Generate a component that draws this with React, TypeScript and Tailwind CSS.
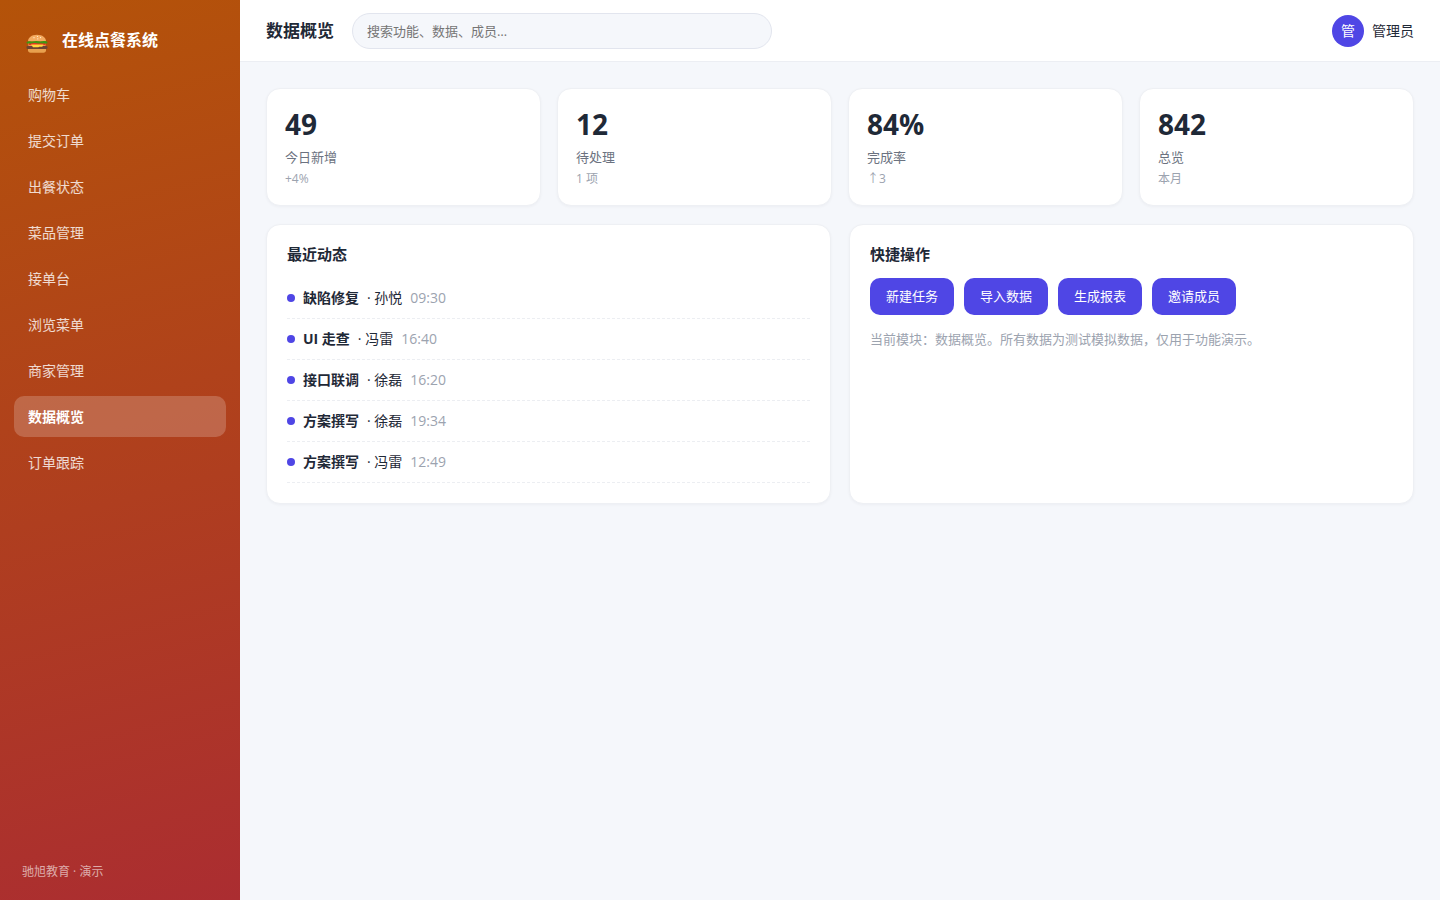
import type { ReactNode } from "react";

type Activity = { title: string; who: string; time: string };

const NAV = ["购物车", "提交订单", "出餐状态", "菜品管理", "接单台", "浏览菜单", "商家管理", "数据概览", "订单跟踪"];

const STATS = [
  { value: "49", label: "今日新增", note: "+4%" },
  { value: "12", label: "待处理", note: "1 项" },
  { value: "84%", label: "完成率", note: "↑3" },
  { value: "842", label: "总览", note: "本月" },
];

const ACTIVITIES: Activity[] = [
  { title: "缺陷修复", who: "孙悦", time: "09:30" },
  { title: "UI 走查", who: "冯雷", time: "16:40" },
  { title: "接口联调", who: "徐磊", time: "16:20" },
  { title: "方案撰写", who: "徐磊", time: "19:34" },
  { title: "方案撰写", who: "冯雷", time: "12:49" },
];

const ACTIONS = ["新建任务", "导入数据", "生成报表", "邀请成员"];

function BurgerIcon() {
  return (
    <svg viewBox="0 0 22 20" className="mt-1.5 h-5 w-[22px] shrink-0" aria-hidden="true">
      <path d="M2 8.500C2 4.500 5.500 1.700 11 1.700s9 2.800 9 6.800z" fill="#f4ab60" />
      <path d="M2 15.500h18v1.800c0 1.500-1 2.500-2.500 2.500h-13C3 19.800 2 18.800 2 17.300z" fill="#e8a04e" />
      <path d="M2.500 9.500h17V13h-17z" fill="#f4ab60" />
      <rect x="0.500" y="13" width="21" height="3" rx="1.200" fill="#6d4534" />
      <path d="M3 9.800h16.500v2.400H3z" fill="#ee2f24" />
      <path d="M5 11.600h12.500l-1.200 2.200h-3l-1 .500H7z" fill="#ffd93b" />
      <path d="M.3 9.700C1.500 8 3.500 8.100 5 8.400c2 .4 3.500-.5 5.500-.4s3.800.7 5.700.3c2-.4 4.400-.3 5.500 1.200-.8 1.200-2.200 1.300-3.700 1.100-2-.3-3-.7-4.500-.2-2 .6-3.500-.6-5.500-.3s-3 .7-4.600.5c-1.200-.1-2.400.2-3.100-.9z" fill="#3f9712" />
      <g fill="#fff3dc">
        <circle cx="8" cy="4.700" r="0.600" />
        <circle cx="11.500" cy="3.500" r="0.600" />
        <circle cx="11.800" cy="5.800" r="0.600" />
        <circle cx="14.500" cy="4.600" r="0.600" />
      </g>
    </svg>
  );
}

function Sidebar() {
  return (
    <aside className="flex w-60 shrink-0 flex-col bg-[linear-gradient(165deg,#b45309_0%,#ab2d31_100%)] px-3.5 pt-5 pb-4 text-white">
      <div className="flex h-10 items-center gap-3.5 px-3">
        <BurgerIcon />
        <span className="text-base font-bold">在线点餐系统</span>
      </div>
      <nav className="mt-3.5 flex flex-col gap-[5px]">
        {NAV.map((item) => {
          const active = item === "数据概览";
          return (
            <a
              key={item}
              href="#"
              aria-current={active ? "page" : undefined}
              className={`flex h-[41px] items-center rounded-[10px] px-3.5 text-sm ${active ? "bg-white/20 font-bold text-white" : "text-white/80"}`}
            >
              {item}
            </a>
          );
        })}
      </nav>
      <div className="mt-auto px-2 text-xs leading-6 text-white/60">驰旭教育 · 演示</div>
    </aside>
  );
}

function Topbar() {
  return (
    <header className="flex h-[62px] items-center gap-[18px] border-b border-[#eceef3] bg-white px-[26px]">
      <h1 className="text-[17px] font-bold">数据概览</h1>
      <input
        type="search"
        aria-label="搜索"
        placeholder="搜索功能、数据、成员…"
        className="h-9 w-[420px] rounded-full border border-[#e2e5ee] bg-[#f5f7fb] px-3.5 text-[13px] outline-none placeholder:text-[#757575]"
      />
      <div className="ml-auto flex items-center gap-2 text-sm">
        <span className="flex size-8 items-center justify-center rounded-full bg-[#4f46e5] text-white">管</span>
        <span>管理员</span>
      </div>
    </header>
  );
}

function StatCard({ value, label, note }: { value: string; label: string; note: string }) {
  return (
    <div className="rounded-[14px] border border-[#eef0f4] bg-white px-[18px] pt-[18px] pb-4 shadow-[0_1px_3px_rgba(15,23,42,0.04)]">
      <div className="text-[28px] leading-[34px] font-bold">{value}</div>
      <div className="mt-1.5 text-[13px] leading-5 text-[#6b7280]">{label}</div>
      <div className="mt-0.5 text-xs leading-5 text-[#9ca3af]">{note}</div>
    </div>
  );
}

function Panel({ title, children }: { title: string; children: ReactNode }) {
  return (
    <section className="rounded-[14px] border border-[#eef0f4] bg-white p-5 shadow-[0_1px_3px_rgba(15,23,42,0.04)]">
      <h2 className="mb-3.5 text-[15px] leading-[19px] font-bold">{title}</h2>
      {children}
    </section>
  );
}

export default function App() {
  return (
    <div className="flex min-h-screen bg-[#f5f7fb] font-['Open_Sans','Noto_Sans_CJK_SC',sans-serif] text-[#1f2937]">
      <Sidebar />
      <div className="min-w-0 flex-1">
        <Topbar />
        <main className="flex flex-col gap-[18px] p-[26px]">
          <div className="grid grid-cols-4 gap-4">
            {STATS.map((s) => (
              <StatCard key={s.label} {...s} />
            ))}
          </div>
          <div className="grid grid-cols-2 gap-[18px]">
            <Panel title="最近动态">
              <ul>
                {ACTIVITIES.map((a) => (
                  <li key={a.time} className="flex h-[41px] items-center gap-2 border-b border-dashed border-[#eceef2] text-sm">
                    <span className="size-2 rounded-full bg-[#4f46e5]" />
                    <b>{a.title}</b>
                    <span>· {a.who}</span>
                    <time className="text-[#9ca3af]">{a.time}</time>
                  </li>
                ))}
              </ul>
            </Panel>
            <Panel title="快捷操作">
              <div className="flex flex-wrap gap-2.5">
                {ACTIONS.map((label) => (
                  <button key={label} type="button" className="h-[37px] rounded-[10px] bg-[#4f46e5] px-4 text-[13px] text-white">
                    {label}
                  </button>
                ))}
              </div>
              <p className="mt-3.5 text-[13px] leading-5 text-[#9ca3af]">
                当前模块：数据概览。所有数据为测试模拟数据，仅用于功能演示。
              </p>
            </Panel>
          </div>
        </main>
      </div>
    </div>
  );
}
